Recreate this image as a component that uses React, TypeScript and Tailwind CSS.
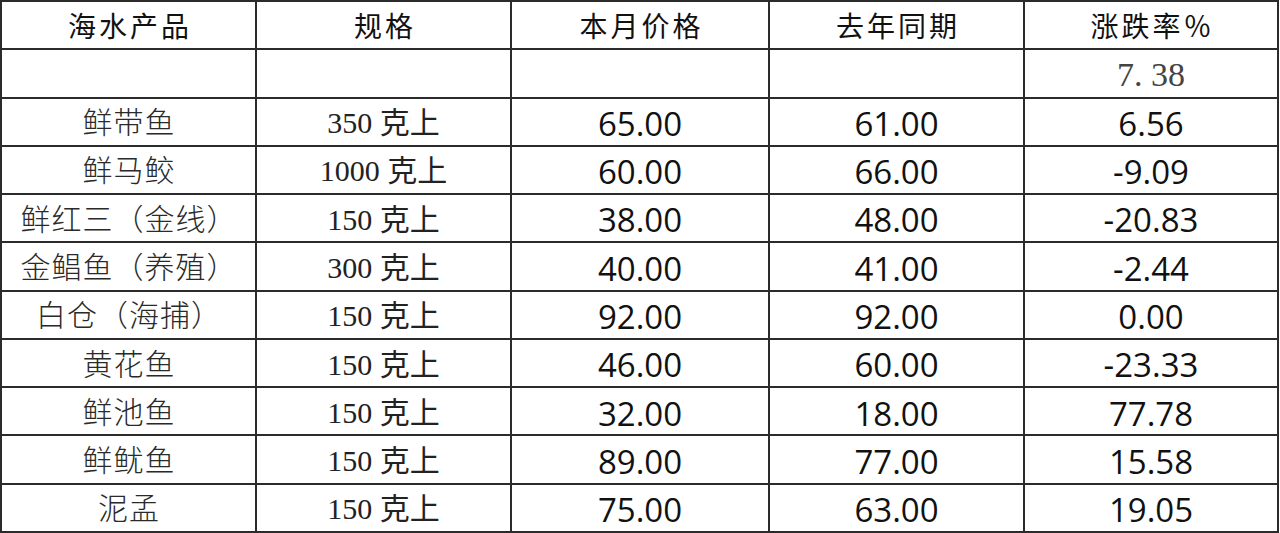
import React from 'react';

type Row = [string, string, string, string, string];

const rows: Row[] = [
  ['鲜带鱼', '350 克上', '65.00', '61.00', '6.56'],
  ['鲜马鲛', '1000 克上', '60.00', '66.00', '-9.09'],
  ['鲜红三（金线）', '150 克上', '38.00', '48.00', '-20.83'],
  ['金鲳鱼（养殖）', '300 克上', '40.00', '41.00', '-2.44'],
  ['白仓（海捕）', '150 克上', '92.00', '92.00', '0.00'],
  ['黄花鱼', '150 克上', '46.00', '60.00', '-23.33'],
  ['鲜池鱼', '150 克上', '32.00', '18.00', '77.78'],
  ['鲜鱿鱼', '150 克上', '89.00', '77.00', '15.58'],
  ['泥孟', '150 克上', '75.00', '63.00', '19.05'],
];

const headers = ['海水产品', '规格', '本月价格', '去年同期', '涨跌率％'];

const cell = 'flex items-center justify-center border-r-2 border-b-2 border-[#2b2b2b] whitespace-nowrap';
const serif = "font-['Liberation_Serif','Noto_Sans_CJK_SC',serif]";
const num = "font-['Open_Sans',sans-serif] text-[33px] text-[#111] pt-[4px]";

export default function App() {
  return (
    <div className="bg-white w-[1280px] h-[533px] overflow-hidden">
      <div className="grid grid-cols-[255px_255px_258px_255px_1fr] grid-rows-[repeat(11,minmax(0,1fr))] w-[1279px] h-[533px] border-t-2 border-l-2 border-[#2b2b2b]">
        {/* header */}
        {headers.map((h) => (
          <div
            key={h}
            className={`${cell} font-['Noto_Sans_CJK_SC',sans-serif] font-normal text-[28px] tracking-[3px] text-[#111] pl-[3px]`}
          >
            {h}
          </div>
        ))}

        {/* overall row */}
        <div className={cell} />
        <div className={cell} />
        <div className={cell} />
        <div className={cell} />
        <div className={`${cell} ${serif} text-[34px] text-[#444] pt-[2px]`}>7. 38</div>

        {rows.map((r) => (
          <React.Fragment key={r[0]}>
            <div className={`${cell} ${serif} font-light text-[30px] tracking-[1px] text-[#2a2a2a] pl-[1px] pt-[2px]`}>
              {r[0]}
            </div>
            <div className={`${cell} ${serif} text-[30px] text-[#222] pt-[2px]`}>{r[1]}</div>
            <div className={`${cell} ${num}`}>{r[2]}</div>
            <div className={`${cell} ${num}`}>{r[3]}</div>
            <div className={`${cell} ${num}`}>{r[4]}</div>
          </React.Fragment>
        ))}
      </div>
    </div>
  );
}
